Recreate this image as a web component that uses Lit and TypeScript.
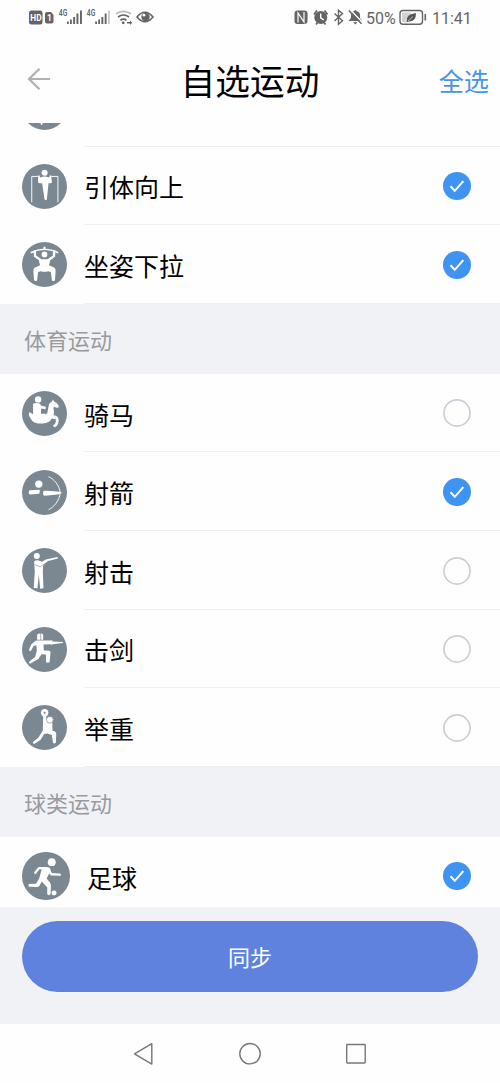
import { LitElement, html, css, svg, nothing } from "lit";
import { customElement, property, state } from "lit/decorators.js";

interface Glyph { box: string; art: unknown; }

// Each pictogram is drawn in the units of its own view box, whose disc fills the box.
const glyphs: Record<string, Glyph> = {
  pullup: {
    box: "66 42 134 134",
    art: svg`<path d="M95 156V79H113M173 156V79H153" fill="none" stroke="#fff" stroke-width="2.800"/>
      <circle cx="133.500" cy="68" r="9"/>
      <path d="M114 76q4-2 5 3l2 3q12-5 25 0l2-3q1-5 5-3l2 20q0 3-5 3h-5l-5 48q-2 6-7 0l-7-48h-6q-6 0-6-3z"/>`,
  },
  partial: {
    box: "66 42 134 134",
    art: svg`<path d="M120 148h7v11q-3 3-5 0z"/>`,
  },
  pulldown: {
    box: "66 279 134 134",
    art: svg`<path d="M92 311Q133 290 174 311" fill="none" stroke="#fff" stroke-width="4.500"/>
      <path d="M130 293h6v10h-6z"/><circle cx="133" cy="316" r="8.500"/>
      <path d="M104 306L105 321L119 331M162 306L161 321L147 331" fill="none" stroke="#fff" stroke-width="7" stroke-linejoin="round" stroke-linecap="round"/>
      <path d="M116 328q17 5 34 0q0 10-4 20l17 8q4 4 3 12l-2 25q-5 5-9 0l-3-25-8-2q-11 3-22 0l-8 2-3 25q-4 5-9 0l-2-25q-1-8 3-12l17-8q-4-10-4-20z"/>`,
  },
  horse: {
    box: "66 33 134 134",
    art: svg`<circle cx="114" cy="58" r="9.500"/>
      <path d="M99 72q5-4 14-3q7 1 11 8l13 3-1 7-13-2v16h18l5-27q2-7 9-9l3-7 4 7q8 2 13 11l0 6-7 1-7-4q-3 5 0 13 1 8-1 13 9 0 13 6 4 7 1 17-2 10-12 13l-4-5q8-4 9-13l-1-7q-6 1-11-1-8 14-27 15h-14q-14-2-21-13-8-11-6-19 3-4 6 1l6 3z"/>
      <path d="M124 88v14M140 86l-3 17" fill="none" stroke="#7c8891" stroke-width="2"/>`,
  },
  archery: {
    box: "66 269 134 134",
    art: svg`<circle cx="116" cy="311" r="11"/>
      <path d="M89 329l29-1q3 5-1 12l-27 2q-5-2-4-7 0-5 3-6zM129 333q3-3 9-2l34 2 15 4-15 5-39 4q-5-2-4-6z"/>
      <path d="M145 289C160 295 177 313 180 337C177 361 160 381 145 387" fill="none" stroke="#fff" stroke-width="2.800"/>`,
  },
  shooting: {
    box: "66 24 134 134",
    art: svg`<circle cx="110" cy="48" r="9"/>
      <path d="M102 64q5-5 13-3l11 4 11-7 35-7 1 4-29 8-15 13-1 20 2 48-10 1-4-42-4 41-11-1 3-48z"/>
      <path d="M103 73l17 7 24-16" fill="none" stroke="#7c8891" stroke-width="1.800"/>`,
  },
  fencing: {
    box: "66 261 134 134",
    art: svg`<path d="M111 283q4-3 9-3h1v19h-10zM123 280q4 0 6 3v16h-6z"/>
      <path d="M108 301h46l2-3v6l32 2v3l-32 3v4l-3-4-23 1 1 18 17 1 3 4-3 31h-10l-1-24-13-1-9 14-24 14q-6 0-3-6l17-14 5-17-1-18-8 2-9 16-6-3 8-18z"/>`,
  },
  weight: {
    box: "66 47 134 134",
    art: svg`<circle cx="133.500" cy="70" r="11"/><circle cx="133.500" cy="70" r="3.200" fill="#7c8891"/>
      <path d="M129 80h9l1 10 9-4 12 3-4 10 1 25q9 1 11 7l-1 28q-5 5-9 0l-3-23-13-4-10 1-11 18-19 12q-6-1-2-7l14-11 14-22z"/>
      <circle cx="149" cy="91" r="10" stroke="#7c8891" stroke-width="2"/>`,
  },
  football: {
    box: "66 36.500 143 143",
    art: svg`<circle cx="155.500" cy="67" r="12"/><circle cx="162.500" cy="160" r="7.500"/>
      <path d="M106 99l11-14h18q6 0 9 4" fill="none" stroke="#fff" stroke-width="7" stroke-linecap="round" stroke-linejoin="round"/>
      <path d="M127 83q12-3 22 1 4 3 3 8l4 8 25 1q5 3 1 7l-29-1-5-6-8 15 9 11q4 5 4 11l-1 26q-6 5-10 0v-21l-16-18-8 14q-3 3-7 3l-24-1q-4-4 0-8l21-1 9-14 4-14z"/>`,
  },
};

@customElement("sport-glyph")
export class SportGlyph extends LitElement {
  @property() name = "";
  static styles = css`
    :host { display: block; }
    .disc { display: block; width: 100%; height: 100%; border-radius: 50%; background: #7c8891; fill: #fff; }
  `;
  render() {
    const g = glyphs[this.name];
    return g ? html`<svg class="disc" viewBox=${g.box}>${g.art}</svg>` : nothing;
  }
}

@customElement("sport-row")
export class SportRow extends LitElement {
  @property() glyph = "";
  @property() label = "";
  @property({ type: Boolean }) checked = false;
  @property({ type: Boolean }) large = false;
  static styles = css`
    :host { display: block; height: 78.6px; flex: none; }
    .row { display: flex; height: 100%; box-sizing: border-box; padding-left: 22px; }
    .icon { width: 45px; height: 45px; margin: 17.300px 17px 0 0; flex: none; }
    .icon.large { width: 47.500px; height: 47.500px; margin: 15.500px 17.500px 0 0; }
    .body { flex: 1; display: flex; align-items: center; justify-content: space-between; padding-right: 29px; border-bottom: 1.500px solid #eeeff1; }
    .label { font-size: 25px; line-height: 36px; color: #000; padding-top: 2px; }
    .mark { display: block; width: 28px; height: 28px; margin-top: 1.500px; }
  `;
  render() {
    return html`<div class="row">
      <sport-glyph class="icon ${this.large ? "large" : ""}" name=${this.glyph}></sport-glyph>
      <div class="body"><span class="label">${this.label}</span>
        <svg class="mark" viewBox="0 0 28 28" fill="none">
          ${this.checked
            ? svg`<circle cx="14" cy="14" r="14" fill="#3f93f2"/><path d="M7.500 14.300l4.300 4.500 8.500-9.700" stroke="#fff" stroke-width="2"/>`
            : svg`<circle cx="14" cy="14" r="13.100" stroke="#cdcfd6" stroke-width="1.700"/>`}
        </svg>
      </div></div>`;
  }
}

@customElement("app-root")
export class AppRoot extends LitElement {
  @state() private groups = [
    { title: "", items: [
      { glyph: "partial", label: "", checked: false },
      { glyph: "pullup", label: "引体向上", checked: true },
      { glyph: "pulldown", label: "坐姿下拉", checked: true } ] },
    { title: "体育运动", items: [
      { glyph: "horse", label: "骑马", checked: false },
      { glyph: "archery", label: "射箭", checked: true },
      { glyph: "shooting", label: "射击", checked: false },
      { glyph: "fencing", label: "击剑", checked: false },
      { glyph: "weight", label: "举重", checked: false } ] },
    { title: "球类运动", items: [
      { glyph: "football", label: "足球", checked: true, large: true } ] },
  ];

  static styles = css`
    :host { display: flex; flex-direction: column; width: 100%; height: 1083px; overflow: hidden; background: #fefefe;
      font-family: "Noto Sans CJK SC", sans-serif; }
    .status { height: 36px; flex: none; display: flex; justify-content: space-between; padding: 0 29px 0 28px;
      color: #646464; font-family: Roboto, sans-serif; font-size: 16.500px; line-height: 37px; }
    .status svg { display: block; flex: none; }
    .right { display: flex; }
    .percent { margin-left: 2px; width: 33px; font-size: 16px; }
    .time { margin-left: 5px; width: 39px; white-space: nowrap; font-size: 16px; }
    .header { height: 87px; flex: none; display: grid; grid-template-columns: 100px 1fr 100px; align-items: center; box-sizing: border-box; padding: 0 11px 0 27px; }
    .back { display: block; margin-top: -2px; }
    .title { margin: 0; text-align: center; font-size: 34.700px; font-weight: 400; line-height: 50px; color: #000; padding: 1px 16px 0 0; white-space: nowrap; }
    .all { justify-self: end; font-size: 25.200px; line-height: 36px; color: #4795ea; }
    .list { height: 784px; flex: none; overflow: hidden; display: flex; flex-direction: column; }
    .first { margin-top: -55px; }
    .section { height: 70px; flex: none; background: #f1f2f6; color: #999a9e; font-size: 22px; line-height: 70px; padding-left: 24px; }
    .footer { height: 117px; flex: none; box-sizing: border-box; padding: 13.500px 22px 0; background: #f1f2f6; }
    .sync { display: block; width: 100%; height: 71px; border: 0; padding: 0; border-radius: 36px; background: #5f82de; color: #fff; font: 400 22px "Noto Sans CJK SC", sans-serif; }
    .nav { flex: 1; display: flex; justify-content: center; gap: 84px; padding-top: 18px; }
    .nav svg { width: 22px; height: 24px; fill: none; stroke: #777; stroke-width: 1.400; stroke-linejoin: round; }
    .tiny { font-size: 8.500px; font-weight: 600; }
  `;

  render() {
    return html`
      <div class="status">
        <svg width="130" height="36" viewBox="28 0 130 36" fill="#646464">
          <rect x="29" y="10.500" width="13.500" height="14" rx="2.500"/>
          <text x="30.300" y="21" font-size="8.300" font-weight="700" fill="#fff">HD</text>
          <path d="M45 14q0-2 2-2h4l2.500 3v6q0 2.500-2 2.500h-4.500q-2 0-2-2z"/>
          <text x="47" y="21.300" font-size="8.500" font-weight="700" fill="#fff">1</text>
          <text class="tiny" x="58.800" y="16.200" textLength="8.500" lengthAdjust="spacingAndGlyphs">4G</text>
          <path d="M67 21.500h1.800v2.500H67zM70 19.500h1.800V24H70zM73.200 17h1.900v7h-1.900zM76.500 13.500h1.900V24h-1.900zM80 10.500h1.900V24H80z"/>
          <text class="tiny" x="86.800" y="16.200" textLength="8.500" lengthAdjust="spacingAndGlyphs">4G</text>
          <path d="M95.200 21.500H97v2.500h-1.800zM98.200 19.500h1.800V24h-1.800zM101.400 17h1.900v7h-1.900zM104.700 13.500h1.900V24h-1.900z"/>
          <path d="M108 10.500h1.900V24H108z" fill="#c9c9c9"/>
          <g fill="none" stroke="#646464" stroke-width="1.700"><path d="M116 13.800q7.500-5 15 0" stroke="#bbb"/><path d="M118 17q5.500-4 11 0M120.500 20.200q3-2.200 6 0"/></g>
          <circle cx="123.200" cy="22.800" r="1.400"/><path d="M127 22h3v-1.500l2.200 2.300-2.200 2.200v-1.500h-3z"/>
          <path d="M137 17q8-9.500 16 0-8 9.500-16 0z" fill="none" stroke="#646464" stroke-width="1.600"/>
          <circle cx="145.500" cy="17" r="4.200"/><circle cx="144" cy="15.200" r="1.400" fill="#fefefe"/>
        </svg>
        <div class="right">
          <svg width="71" height="36" viewBox="293 0 71 36" fill="#646464">
            <rect x="294.500" y="10.500" width="13" height="13.500" rx="3"/>
            <path d="M298 22.500V13l6 9V12" fill="none" stroke="#fff" stroke-width="1.200"/>
            <circle cx="320.800" cy="17.500" r="6.500"/><path d="M314 14.500l3-4M327.500 14.500l-3-4M316 24.500l1.500-2M325.500 24.500l-1.500-2" stroke="#646464" stroke-width="1.800"/>
            <path d="M320.700 13.500v4.300l3 2" fill="none" stroke="#fff" stroke-width="1.400"/>
            <path d="M334.500 13.500l8 7.200-4 3.500v-14l4 3.300-8 7.500" fill="none" stroke="#646464" stroke-width="1.400"/>
            <path d="M348.500 21l2.500-3v-3q0-3 3-4l1.200-1 1.300 1q3.500 1 3.500 4v3l2 3zM353 22.200h4.500l-2.200 2.200z"/>
            <path d="M349.800 9.200l13 13.500" stroke="#fefefe" stroke-width="1.400"/><path d="M348.800 10.500l12.700 13.300" stroke="#646464" stroke-width="1.500"/>
          </svg>
          <span class="percent">50%</span>
          <svg width="28" height="36" viewBox="399 0 28 36">
            <rect x="400" y="10.500" width="22.500" height="13.700" rx="3" fill="none" stroke="#646464" stroke-width="1.400"/>
            <rect x="402" y="12.500" width="9" height="9.700" rx="1" fill="#d2d2d2"/>
            <path d="M407 21q-1-7 9-8 0 9-7 8.300l-2.500 1z" fill="#555"/><path d="M408 21l5-4.500" stroke="#fff" stroke-width=".6"/>
            <path d="M425.300 14v6.500" stroke="#646464" stroke-width="1.600"/>
          </svg>
          <span class="time">11:41</span>
        </div>
      </div>
      <header class="header">
        <svg class="back" width="24" height="24" viewBox="27 67 24 24" fill="none" stroke="#b1b1b1" stroke-width="2.200"><path d="M50 79H29M39.500 68.800L29 79l10.500 10.300"/></svg>
        <h1 class="title">自选运动</h1>
        <span class="all">全选</span>
      </header>
      <main class="list">
        ${this.groups.map((g, n) => html`
          ${g.title ? html`<div class="section">${g.title}</div>` : nothing}
          ${g.items.map((it, i) => html`<sport-row class=${n + i === 0 ? "first" : ""} .glyph=${it.glyph} .label=${it.label} .checked=${it.checked} .large=${"large" in it}></sport-row>`)}
        `)}
      </main>
      <footer class="footer"><button class="sync">同步</button></footer>
      <nav class="nav">
        <svg viewBox="0 0 22 24"><path d="M18.800 1.700v20.400L1.500 11.900z"/></svg>
        <svg viewBox="0 0 22 24"><circle cx="11" cy="11.700" r="10.200"/></svg>
        <svg viewBox="0 0 22 24"><rect x="1.700" y="2.500" width="18.500" height="18.500" rx=".7"/></svg>
      </nav>`;
  }
}
